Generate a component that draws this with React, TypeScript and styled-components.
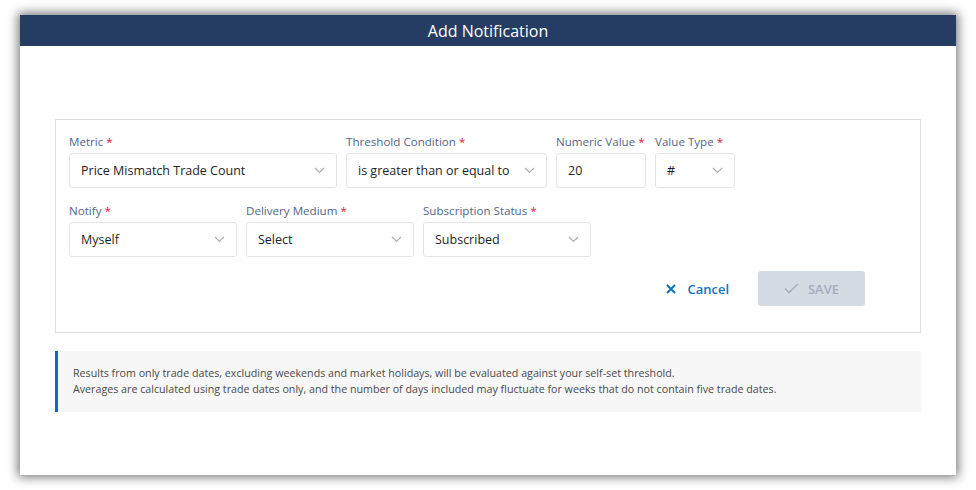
import React from 'react'
import styled, {createGlobalStyle} from 'styled-components'

const GlobalStyle = createGlobalStyle`
  html, body {
    margin: 0;
    padding: 0;
    background: #ffffff;
  }
  body {
    font-family: "Open Sans", "Liberation Sans", Arial, sans-serif;
  }
`

const Page = styled.div`
  padding: 15px 20px;
  width: 976px;
  height: 490px;
  box-sizing: border-box;
`

const Modal = styled.div`
  width: 936px;
  height: 460px;
  background: #ffffff;
  box-shadow: 0 0 10px 2px rgba(0, 0, 0, 0.55);
  display: flex;
  flex-direction: column;
`

const Header = styled.header`
  height: 31px;
  background: #253d63;
  color: #ffffff;
  font-size: 16px;
  display: flex;
  align-items: center;
  justify-content: center;
`

const Body = styled.div`
  padding: 73px 35px 0;
`

const Card = styled.section`
  border: 1px solid #dfdfdf;
  padding: 14px 55px 26px 13px;
  display: flex;
  flex-direction: column;
`

const Row = styled.div`
  display: flex;
  gap: 9px;
  margin-bottom: 15px;

  & + & {
    margin-bottom: 14px;
  }
`

const Field = styled.div<{ $w: number }>`
  width: ${p => p.$w}px;
  display: flex;
  flex-direction: column;
`

const Label = styled.label`
  font-size: 11.6px;
  line-height: 16px;
  color: #52668a;
  margin-bottom: 3px;
  white-space: nowrap;

  span {
    color: #d4213d;
  }
`

const Box = styled.div`
  height: 35px;
  box-sizing: border-box;
  border: 1px solid #e2e4e8;
  border-radius: 3px;
  padding: 0 11px;
  display: flex;
  align-items: center;
  justify-content: space-between;
  font-size: 12.5px;
  color: #1e1e1e;
  white-space: nowrap;
`

const Actions = styled.div`
  display: flex;
  justify-content: flex-end;
  align-items: center;
  gap: 29px;
`

const CancelButton = styled.button`
  border: none;
  background: none;
  padding: 0;
  display: flex;
  align-items: center;
  gap: 11px;
  font-family: inherit;
  font-size: 13px;
  font-weight: 600;
  color: #1370c2;
`

const SaveButton = styled.button`
  width: 107px;
  height: 35px;
  border: none;
  border-radius: 3px;
  background: #d5dbe3;
  color: #a3adbc;
  font-family: inherit;
  font-size: 13px;
  font-weight: 600;
  display: flex;
  align-items: center;
  justify-content: center;
  gap: 9px;
`

const Info = styled.div`
  margin-top: 18px;
  background: #f7f7f7;
  border-left: 3px solid #0a6cc2;
  padding: 14px 15px 15px 15px;
  font-size: 10.7px;
  line-height: 16px;
  color: #4a4a4a;
`

function Chevron() {
    return (
        <svg width="11" height="7" viewBox="0 0 11 7" fill="none">
            <path d="M1 1l4.5 4.5L10 1" stroke="#a9afb9" strokeWidth="1.2"/>
        </svg>
    )
}

function Select(props: { value: string }) {
    return <Box>{props.value}<Chevron/></Box>
}

const fields1 = [
    {label: 'Metric', value: 'Price Mismatch Trade Count', w: 268, select: true},
    {label: 'Threshold Condition', value: 'is greater than or equal to', w: 201, select: true},
    {label: 'Numeric Value', value: '20', w: 90, select: false},
    {label: 'Value Type', value: '#', w: 80, select: true},
]

const fields2 = [
    {label: 'Notify', value: 'Myself', w: 168, select: true},
    {label: 'Delivery Medium', value: 'Select', w: 168, select: true},
    {label: 'Subscription Status', value: 'Subscribed', w: 168, select: true},
]

function FieldRow(props: { fields: typeof fields1 }) {
    return (
        <Row>
            {props.fields.map(f => (
                <Field key={f.label} $w={f.w}>
                    <Label>{f.label} <span>*</span></Label>
                    {f.select ? <Select value={f.value}/> : <Box>{f.value}</Box>}
                </Field>
            ))}
        </Row>
    )
}

export default function App() {
    return (
        <Page>
            <GlobalStyle/>
            <Modal>
                <Header>Add Notification</Header>
                <Body>
                    <Card>
                        <FieldRow fields={fields1}/>
                        <FieldRow fields={fields2}/>
                        <Actions>
                            <CancelButton>
                                <svg width="10" height="10" viewBox="0 0 10 10">
                                    <path d="M1 1l8 8M9 1l-8 8" stroke="#1370c2" strokeWidth="2"/>
                                </svg>
                                Cancel
                            </CancelButton>
                            <SaveButton>
                                <svg width="15" height="11" viewBox="0 0 15 11" fill="none">
                                    <path d="M1 5.5l4 4L14 1" stroke="#a3adbc" strokeWidth="1.5"/>
                                </svg>
                                SAVE
                            </SaveButton>
                        </Actions>
                    </Card>
                    <Info>
                        Results from only trade dates, excluding weekends and market holidays, will be evaluated against your self-set threshold.<br/>
                        Averages are calculated using trade dates only, and the number of days included may fluctuate for weeks that do not contain five trade dates.
                    </Info>
                </Body>
            </Modal>
        </Page>
    )
}
